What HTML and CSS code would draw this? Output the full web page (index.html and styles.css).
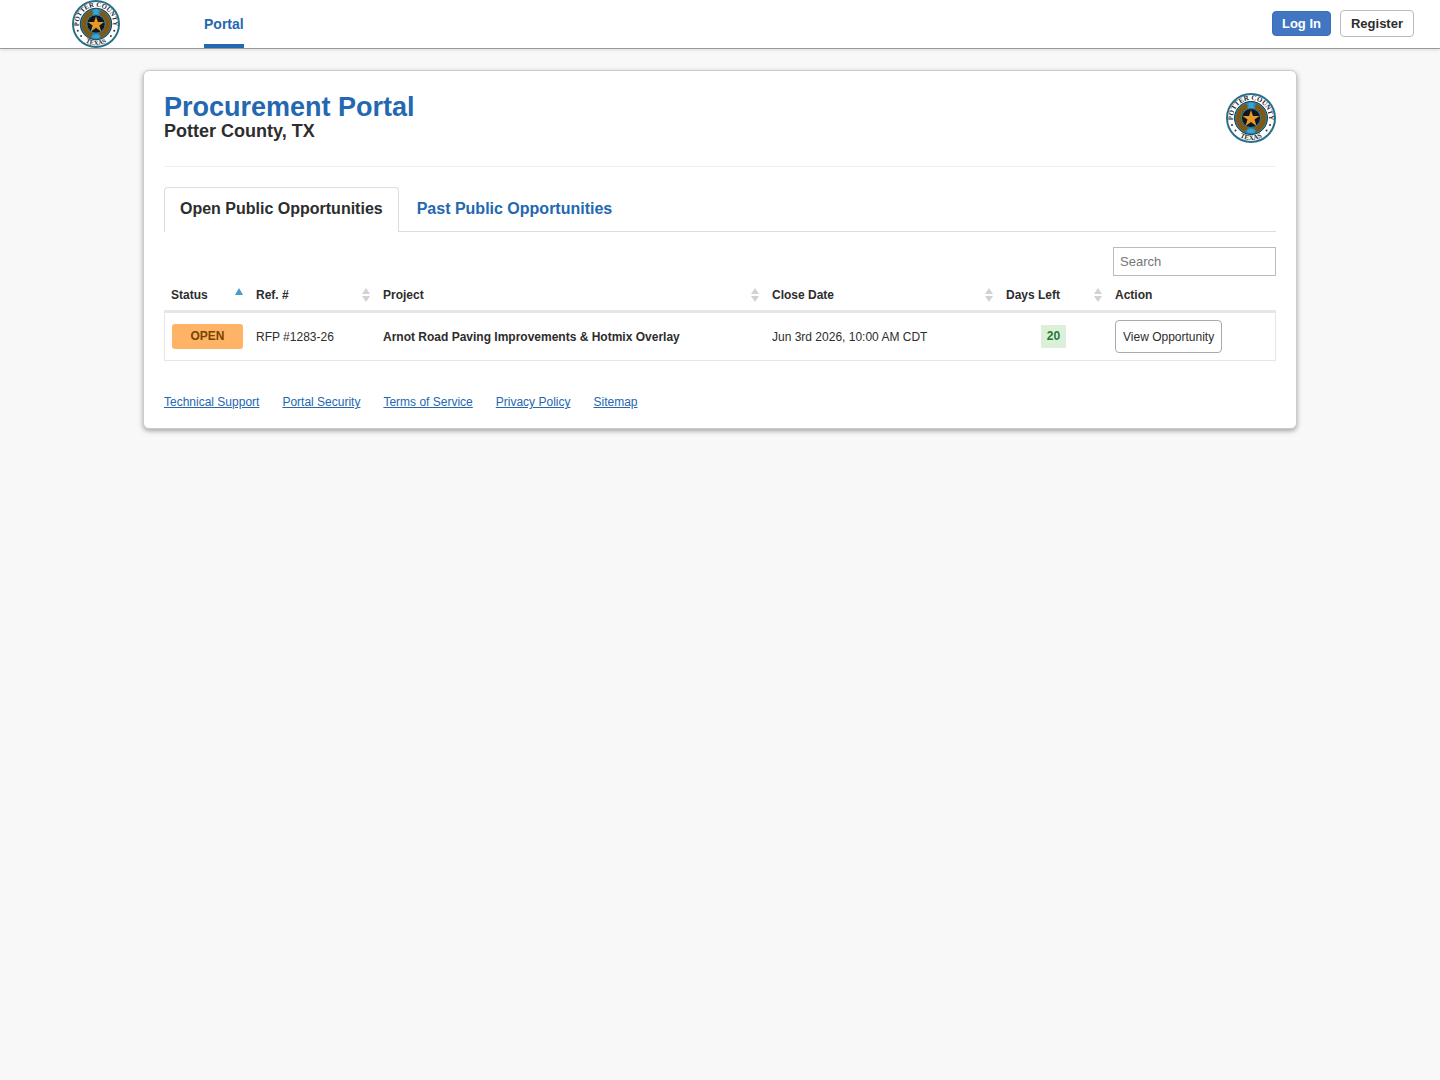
FILE: index.html
```
<!DOCTYPE html>
<html lang="en">

<head>
    <meta charset="UTF-8">
    <title>Procurement Portal - Potter County, TX</title>
    <meta name="viewport" content="width=device-width, initial-scale=1.0">
    <link rel="stylesheet" href="styles.css">
</head>

<body>
    <!-- sort arrows, reused in the table header -->
    <svg class="sprite" aria-hidden="true">
        <symbol id="sort" viewBox="0 0 8 14">
            <path d="M4 0l4 6H0zM0 8h8l-4 6z" />
        </symbol>
        <symbol id="sortUp" viewBox="0 0 8 14">
            <path d="M4 0l4 7H0z" />
        </symbol>
    </svg>

    <header class="navbar">
        <a href="#" class="navbar-logo" aria-label="Potter County">
            <svg viewBox="0 0 100 100">
                <defs>
                    <path id="sealTop" d="M20.5 70.6A36 36 0 1 1 79.5 70.6" />
                    <path id="sealBottom" d="M9 66A44 44 0 0 0 91 66" />
                </defs>
                <g id="seal">
                    <circle cx="50" cy="50" r="48" fill="#fff" stroke="#2a6f88" stroke-width="4" />
                    <circle cx="50" cy="50" r="33" fill="#2586ad" stroke="#18394a" stroke-width="2" />
                    <circle cx="50" cy="50" r="25" fill="none" stroke="#805713" stroke-width="11" stroke-dasharray="62 16.5" stroke-dashoffset="31" />
                    <circle cx="50" cy="50" r="19" fill="#10161c" stroke="#277fa0" stroke-width="2" />
                    <path d="M42 22l8-4 8 4-4 3 4 5H42l4-5zM40 75l10-4 10 4-5 5H45z" fill="#3fa2cf" />
                    <path d="M50 34l4 12h13L57 53l4 13-11-8-11 8 4-13-10-7h13z" fill="#e59a27" />
                    <text class="seal-text"><textPath href="#sealTop" startOffset="50%">POTTER COUNTY</textPath></text>
                    <text class="seal-text"><textPath href="#sealBottom" startOffset="50%">TEXAS</textPath></text>
                    <g fill="#333">
                        <circle cx="12" cy="64" r="2" />
                        <circle cx="19" cy="75" r="2" />
                        <circle cx="88" cy="64" r="2" />
                        <circle cx="81" cy="75" r="2" />
                    </g>
                </g>
            </svg>
        </a>
        <nav class="navbar-links">
            <a href="#" class="active">Portal</a>
        </nav>
        <div class="navbar-buttons">
            <button type="button" class="btn btn-primary">Log In</button>
            <button type="button" class="btn">Register</button>
        </div>
    </header>

    <main class="card">
        <div class="card-header">
            <div>
                <h1>Procurement Portal</h1>
                <h2>Potter County, TX</h2>
            </div>
            <svg class="card-logo" viewBox="0 0 100 100" role="img" aria-label="Potter County seal"><use href="#seal" /></svg>
        </div>
        <hr>

        <div class="tabs">
            <a href="#open" class="tab active">Open Public Opportunities</a>
            <a href="#past" class="tab">Past Public Opportunities</a>
        </div>

        <div class="search">
            <input type="search" placeholder="Search" aria-label="Search">
        </div>

        <table id="open">
            <thead>
                <tr>
                    <th class="col-status"><div class="th">Status <svg class="sort sorted"><use href="#sortUp" /></svg></div></th>
                    <th class="col-ref"><div class="th">Ref. # <svg class="sort"><use href="#sort" /></svg></div></th>
                    <th><div class="th">Project <svg class="sort"><use href="#sort" /></svg></div></th>
                    <th class="col-date"><div class="th">Close Date <svg class="sort"><use href="#sort" /></svg></div></th>
                    <th class="col-days"><div class="th">Days Left <svg class="sort"><use href="#sort" /></svg></div></th>
                    <th class="col-action"><div class="th">Action</div></th>
                </tr>
            </thead>
            <tbody>
                <tr>
                    <td><span class="status">OPEN</span></td>
                    <td>RFP #1283-26</td>
                    <td><strong>Arnot Road Paving Improvements &amp; Hotmix Overlay</strong></td>
                    <td>Jun 3rd 2026, 10:00 AM CDT</td>
                    <td class="days"><span class="days-left">20</span></td>
                    <td><button type="button" class="btn-view">View Opportunity</button></td>
                </tr>
            </tbody>
        </table>

        <footer>
            <a href="#">Technical Support</a>
            <a href="#">Portal Security</a>
            <a href="#">Terms of Service</a>
            <a href="#">Privacy Policy</a>
            <a href="#">Sitemap</a>
        </footer>
    </main>
</body>

</html>
```
FILE: styles.css
```
body {
    margin: 0;
    background: #f8f8f8;
    color: #2d2d2d;
    font-family: "Liberation Sans", Arial, sans-serif;
    font-size: 12px;
}

button, input {
    font-family: inherit;
    box-sizing: border-box;
}

a {
    color: #2368b0;
}

.sprite {
    position: absolute;
    width: 0;
    height: 0;
}

.seal-text {
    font-family: "Liberation Serif", serif;
    font-size: 14px;
    font-weight: bold;
    fill: #20262c;
    text-anchor: middle;
}

/* Top bar */
.navbar {
    display: flex;
    height: 48px;
    padding: 0 26px 0 72px;
    background: #fff;
    border-bottom: 1px solid #999;
    box-shadow: 0 1px 3px rgba(0, 0, 0, 0.12);
}

.navbar-logo svg {
    display: block;
    width: 48px;
    height: 48px;
}

.navbar-links {
    display: flex;
    margin-left: 84px;
}

.navbar-links a {
    box-sizing: border-box;
    height: 48px;
    line-height: 48px;
    font-size: 14px;
    font-weight: bold;
    text-decoration: none;
}

.navbar-links a.active {
    border-bottom: 4px solid #2368b0;
}

.navbar-buttons {
    display: flex;
    align-items: center;
    gap: 9px;
    margin-left: auto;
    padding-bottom: 2px;
}

.btn {
    height: 27px;
    padding: 0 10px;
    border: 1px solid #bbb;
    border-radius: 4px;
    background: #fff;
    color: #2d2d2d;
    font-size: 13px;
    font-weight: bold;
}

.btn-primary {
    height: 25px;
    padding: 0 9px;
    border-color: #3b6fba;
    background: #4275c2;
    color: #fff;
}

/* Main card */
.card {
    width: 80%;
    box-sizing: content-box;
    margin: 21px auto;
    border: 1px solid #ccc;
    border-radius: 6px;
    background: #fff;
    box-shadow: 0 2px 5px rgba(0, 0, 0, 0.35);
}

.card-header, hr, .tabs, .search, table, footer {
    margin-left: 20px;
    margin-right: 20px;
}

.card-header {
    display: flex;
    justify-content: space-between;
    padding: 22px 0 23px;
}

h1, h2 {
    margin: 0;
}

h1 {
    color: #2368b0;
    font-size: 27px;
    line-height: 28px;
}

h2 {
    font-size: 18px;
    line-height: 21px;
}

.card-logo {
    width: 50px;
    height: 50px;
}

hr {
    margin-top: 0;
    margin-bottom: 20px;
    border: 0;
    border-top: 1px solid #f0f0f0;
}

.tabs {
    display: flex;
    gap: 2px;
    border-bottom: 1px solid #ddd;
}

.tab {
    padding: 11px 15px 12px;
    border: 1px solid transparent;
    border-bottom: 0;
    border-radius: 4px 4px 0 0;
    font-size: 16px;
    line-height: 20px;
    font-weight: bold;
    text-decoration: none;
}

.tab.active {
    margin-bottom: -1px;
    border-color: #ddd;
    background: #fff;
    color: #2d2d2d;
}

.search {
    display: flex;
    justify-content: flex-end;
    margin-top: 15px;
}

.search input {
    width: 163px;
    height: 29px;
    padding: 0 6px;
    border: 1px solid #bbb;
    font-size: 13px;
}

.search input::placeholder {
    color: #757575;
}

/* Opportunities table */
table {
    width: calc(100% - 40px);
    table-layout: fixed;
    border-spacing: 0;
}

th, td {
    padding: 0 7px;
    text-align: left;
}

th {
    height: 34px;
    padding-right: 6px;
    border-bottom: 3px solid #e6e6e6;
}

.th {
    display: flex;
    align-items: center;
    justify-content: space-between;
    height: 30px;
    padding-top: 4px;
    line-height: 14px;
}

.sort {
    width: 8px;
    height: 14px;
    fill: #d2d2d2;
}

.sort.sorted {
    fill: #4a9cc8;
}

.col-status { width: 72px; }
.col-ref { width: 114px; }
.col-date { width: 221px; }
.col-days { width: 96px; }
.col-action { width: 155px; }

td {
    height: 47px;
    border-bottom: 1px solid #e6e6e6;
}

td:first-child {
    border-left: 1px solid #e6e6e6;
}

td:last-child {
    border-right: 1px solid #e6e6e6;
}

.status {
    display: block;
    width: 71px;
    border-radius: 3px;
    background: #ffb366;
    color: #7a4300;
    font-weight: bold;
    line-height: 25px;
    text-align: center;
}

.days {
    text-align: center;
}

.days-left {
    display: inline-block;
    padding: 0 6px;
    background: #dcf0d9;
    color: #1f7a35;
    font-weight: bold;
    line-height: 23px;
}

.btn-view {
    height: 33px;
    padding: 0 7px;
    border: 1px solid #aaa;
    border-radius: 4px;
    background: #fff;
    color: #2d2d2d;
    font-size: 12px;
}

footer {
    display: flex;
    gap: 23px;
    padding: 34px 0 19px;
    line-height: 14px;
}
```
